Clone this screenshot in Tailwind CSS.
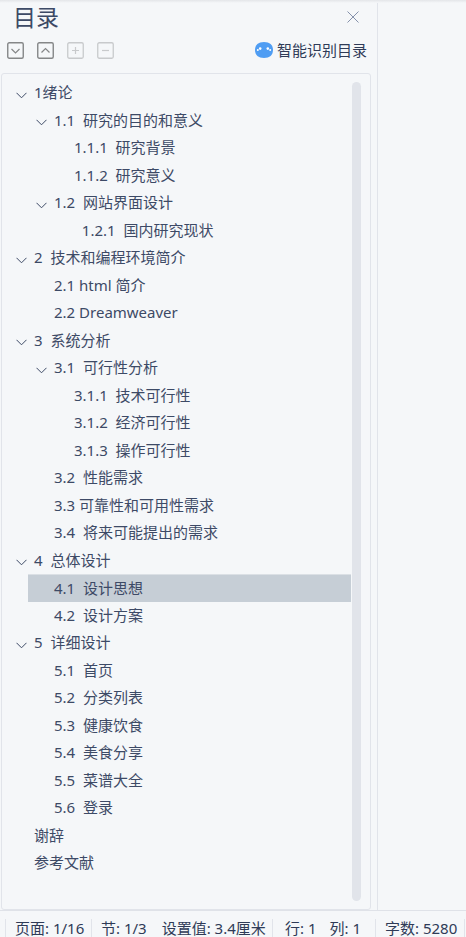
<!DOCTYPE html>
<html lang="zh-CN">
<head>
    <meta charset="UTF-8">
    <meta name="viewport" content="width=device-width, initial-scale=1.0">
    <title>目录</title>
    <script src="https://cdn.jsdelivr.net/npm/@tailwindcss/browser@4"></script>
    <style>
        body { font-family: 'Noto Sans', 'Noto Sans CJK SC', sans-serif; }
    </style>
</head>
<body class="flex h-screen flex-col overflow-hidden bg-[#f5f7f9] text-[15px] text-[#3d4a66]">
    <div class="h-[3px] shrink-0 bg-gradient-to-b from-[#e4e6e9] to-[#f5f7f9]"></div>

    <main class="flex min-h-0 flex-1">
        <aside class="flex w-[378px] shrink-0 flex-col border-r border-[#e1e4ea] pr-[6px] pl-px">
            <header class="flex h-7 items-center justify-between pr-3 pl-3">
                <h1 class="text-[23px] leading-7">目录</h1>
                <button type="button" aria-label="关闭" class="text-[#8591ab]">
                    <svg class="size-3" viewBox="0 0 12 12" fill="none" stroke="currentColor"><path d="M.5 .5l11 11M11.5 .5l-11 11"/></svg>
                </button>
            </header>

            <!-- Barra de herramientas -->
            <div class="flex h-[42px] items-center justify-between pr-1 pb-1 pl-[6px]">
                <div class="flex gap-[13px]">
                    <button type="button" aria-label="展开" class="text-[#858788]">
                        <svg class="size-[17px]" viewBox="0 0 17 17" fill="none" stroke="currentColor"><rect x=".75" y=".75" width="15.5" height="15.5" rx="1.5" stroke-width="1.4"/><path d="M4.500 7l4 4 4-4" stroke-width="1.2"/></svg>
                    </button>
                    <button type="button" aria-label="收起" class="text-[#858788]">
                        <svg class="size-[17px]" viewBox="0 0 17 17" fill="none" stroke="currentColor"><rect x=".75" y=".75" width="15.5" height="15.5" rx="1.5" stroke-width="1.4"/><path d="M4.500 10.500l4-4 4 4" stroke-width="1.2"/></svg>
                    </button>
                    <button type="button" aria-label="增加" disabled class="text-[#c8cacc]">
                        <svg class="size-[17px]" viewBox="0 0 17 17" fill="none" stroke="currentColor"><rect x=".75" y=".75" width="15.5" height="15.5" rx="1.5" stroke-width="1.3"/><path d="M5 8.500h7M8.500 5v7" stroke-width="1.2"/></svg>
                    </button>
                    <button type="button" aria-label="减少" disabled class="text-[#c8cacc]">
                        <svg class="size-[17px]" viewBox="0 0 17 17" fill="none" stroke="currentColor"><rect x=".75" y=".75" width="15.5" height="15.5" rx="1.5" stroke-width="1.3"/><path d="M5 8.500h7" stroke-width="1.2"/></svg>
                    </button>
                </div>
                <button type="button" class="flex items-center gap-1 leading-5 text-[#2f3b57]">
                    <svg class="h-4 w-[18px]" viewBox="0 0 18 16"><path d="M9 0c5.600 0 9 2.800 9 8s-3.400 8-9 8-9-2.800-9-8 3.400-8 9-8z" fill="#4f9df3"/><g fill="#fff"><circle cx="5.200" cy="6.600" r="1.300"/><circle cx="2.800" cy="8" r="1"/><circle cx="12.800" cy="6.600" r="1.300"/><circle cx="15.200" cy="8" r="1"/></g></svg>
                    智能识别目录
                </button>
            </div>

            <nav class="flex min-h-0 flex-1 rounded-[3px] border border-[#e1e4ea] pr-[9px]">
                <ul id="toc" class="min-w-0 flex-1 pt-[5px]"></ul>
                <div class="mt-2 mb-2 ml-px w-[9px] rounded-full bg-[#e1e4ea]"></div>
            </nav>
        </aside>
    </main>

    <footer class="flex h-[27px] shrink-0 items-end border-t border-[#dfe2e8] pl-[5px] leading-[18px] whitespace-nowrap text-[#2f3b57]">
        <span class="w-[86px] shrink-0 border-l border-[#e1e4ea] pl-[9px]">页面: 1/16</span>
        <span class="flex w-[181px] shrink-0 gap-[15px] border-l border-[#e1e4ea] pl-[9px]"><span>节: 1/3</span><span>设置值: 3.4厘米</span></span>
        <span class="flex w-[103px] shrink-0 gap-[13px] border-l border-[#e1e4ea] pl-3"><span>行: 1</span><span>列: 1</span></span>
        <span class="w-[90px] shrink-0 border-x border-[#e1e4ea] pl-[9px]">字数: 5280</span>
    </footer>

    <script>
        // nivel, texto, desplegable
        const items = [
            [1, "1绪论", true],
            [2, "1.1  研究的目的和意义", true],
            [3, "1.1.1  研究背景"],
            [3, "1.1.2  研究意义"],
            [2, "1.2  网站界面设计", true],
            [3, "  1.2.1  国内研究现状"],
            [1, "2  技术和编程环境简介", true],
            [2, "2.1 html 简介"],
            [2, "2.2 Dreamweaver"],
            [1, "3  系统分析", true],
            [2, "3.1  可行性分析", true],
            [3, "3.1.1  技术可行性"],
            [3, "3.1.2  经济可行性"],
            [3, "3.1.3  操作可行性"],
            [2, "3.2  性能需求"],
            [2, "3.3 可靠性和可用性需求"],
            [2, "3.4  将来可能提出的需求"],
            [1, "4  总体设计", true],
            [2, "4.1  设计思想"],
            [2, "4.2  设计方案"],
            [1, "5  详细设计", true],
            [2, "5.1  首页"],
            [2, "5.2  分类列表"],
            [2, "5.3  健康饮食"],
            [2, "5.4  美食分享"],
            [2, "5.5  菜谱大全"],
            [2, "5.6  登录"],
            [1, "谢辞"],
            [1, "参考文献"]
        ];
        const indent = { 1: "pl-3", 2: "pl-8", 3: "pl-[52px]" };
        const selected = "4.1  设计思想";
        const chevron = '<button type="button" aria-label="折叠" class="flex w-5 shrink-0 items-center pl-[2px] pt-1"><svg class="h-[7px] w-[11px]" viewBox="0 0 11 7" fill="none" stroke="currentColor"><path d="M.5 .8l5 5 5-5"/></svg></button>';

        document.getElementById("toc").innerHTML = items.map(([level, text, open]) => {
            const row = text === selected
                ? "ml-[26px] flex h-7 border-t border-[#dbe0e5] bg-[#c6ced6] pl-[6px]"
                : "flex h-[27px] odd:h-7 " + indent[level];
            const toggle = open ? chevron : '<span class="w-5 shrink-0"></span>';
            return `<li class="${row}">${toggle}<a href="#" class="flex-1 leading-[27px] whitespace-pre">${text}</a></li>`;
        }).join("");
    </script>
</body>
</html>
